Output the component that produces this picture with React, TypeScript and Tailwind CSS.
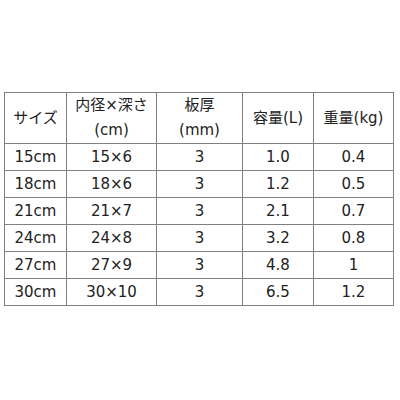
import React from "react";

const rows = [
  ["15cm", "15×6", "3", "1.0", "0.4"],
  ["18cm", "18×6", "3", "1.2", "0.5"],
  ["21cm", "21×7", "3", "2.1", "0.7"],
  ["24cm", "24×8", "3", "3.2", "0.8"],
  ["27cm", "27×9", "3", "4.8", "1"],
  ["30cm", "30×10", "3", "6.5", "1.2"],
];

export default function App() {
  return (
    <div
      className="w-[400px] h-[400px] bg-white pt-[92px] pl-[4px] text-[15px] text-[#222]"
      style={{ fontFamily: '"DejaVu Sans", "Noto Sans CJK JP", sans-serif' }}
    >
      <table className="table-fixed border-collapse w-[390px]">
        <colgroup>
          <col className="w-[62px]" />
          <col className="w-[90px]" />
          <col className="w-[86px]" />
          <col className="w-[71px]" />
          <col className="w-[80px]" />
        </colgroup>
        <thead>
          <tr className="h-[51px]">
            <th className="border border-[#808080] font-normal text-center leading-[25px] p-0">サイズ</th>
            <th className="border border-[#808080] font-normal text-center leading-[25px] p-0">
              内径×深さ
              <br />
              (cm)
            </th>
            <th className="border border-[#808080] font-normal text-center leading-[25px] p-0">
              板厚
              <br />
              (mm)
            </th>
            <th className="border border-[#808080] font-normal text-center leading-[25px] p-0">容量(L)</th>
            <th className="border border-[#808080] font-normal text-center leading-[25px] p-0">重量(kg)</th>
          </tr>
        </thead>
        <tbody>
          {rows.map((r, i) => (
            <tr key={i} className="h-[27px]">
              {r.map((c, j) => (
                <td key={j} className="border border-[#808080] text-center p-0 leading-[20px]">
                  {c}
                </td>
              ))}
            </tr>
          ))}
        </tbody>
      </table>
    </div>
  );
}
